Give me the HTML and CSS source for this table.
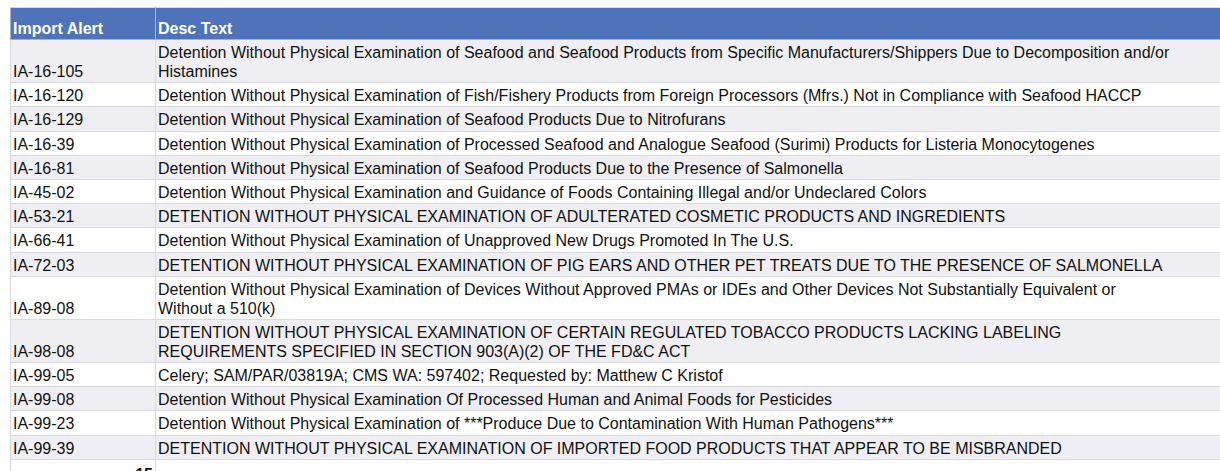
FILE: index.html
```html
<!DOCTYPE html>
<html>
<head>
<meta charset="utf-8">
<link rel="stylesheet" href="styles.css">
</head>
<body>
<table class="sheet">
  <colgroup><col class="c1"><col class="c2"></colgroup>
  <thead>
    <tr><th>Import Alert</th><th>Desc Text</th></tr>
  </thead>
  <tbody>
    <tr class="alt"><td>IA-16-105</td><td>Detention Without Physical Examination of Seafood and Seafood Products from Specific Manufacturers/Shippers Due to Decomposition and/or<br>Histamines</td></tr>
    <tr><td>IA-16-120</td><td>Detention Without Physical Examination of Fish/Fishery Products from Foreign Processors (Mfrs.) Not in Compliance with Seafood HACCP</td></tr>
    <tr class="alt"><td>IA-16-129</td><td>Detention Without Physical Examination of Seafood Products Due to Nitrofurans</td></tr>
    <tr><td>IA-16-39</td><td>Detention Without Physical Examination of Processed Seafood and Analogue Seafood (Surimi) Products for Listeria Monocytogenes</td></tr>
    <tr class="alt"><td>IA-16-81</td><td>Detention Without Physical Examination of Seafood Products Due to the Presence of Salmonella</td></tr>
    <tr><td>IA-45-02</td><td>Detention Without Physical Examination and Guidance of Foods Containing Illegal and/or Undeclared Colors</td></tr>
    <tr class="alt"><td>IA-53-21</td><td>DETENTION WITHOUT PHYSICAL EXAMINATION OF ADULTERATED COSMETIC PRODUCTS AND INGREDIENTS</td></tr>
    <tr><td>IA-66-41</td><td>Detention Without Physical Examination of Unapproved New Drugs Promoted In The U.S.</td></tr>
    <tr class="alt"><td>IA-72-03</td><td>DETENTION WITHOUT PHYSICAL EXAMINATION OF PIG EARS AND OTHER PET TREATS DUE TO THE PRESENCE OF SALMONELLA</td></tr>
    <tr><td>IA-89-08</td><td>Detention Without Physical Examination of Devices Without Approved PMAs or IDEs and Other Devices Not Substantially Equivalent or<br>Without a 510(k)</td></tr>
    <tr class="alt"><td>IA-98-08</td><td>DETENTION WITHOUT PHYSICAL EXAMINATION OF CERTAIN REGULATED TOBACCO PRODUCTS LACKING LABELING<br>REQUIREMENTS SPECIFIED IN SECTION 903(A)(2) OF THE FD&amp;C ACT</td></tr>
    <tr><td>IA-99-05</td><td>Celery; SAM/PAR/03819A; CMS WA: 597402; Requested by: Matthew C Kristof</td></tr>
    <tr class="alt"><td>IA-99-08</td><td>Detention Without Physical Examination Of Processed Human and Animal Foods for Pesticides</td></tr>
    <tr><td>IA-99-23</td><td>Detention Without Physical Examination of ***Produce Due to Contamination With Human Pathogens***</td></tr>
    <tr class="alt"><td>IA-99-39</td><td>DETENTION WITHOUT PHYSICAL EXAMINATION OF IMPORTED FOOD PRODUCTS THAT APPEAR TO BE MISBRANDED</td></tr>
  </tbody>
  <tfoot>
    <tr><td class="count">15</td><td></td></tr>
  </tfoot>
</table>
</body>
</html>
```

FILE: styles.css
```css
html, body {
  margin: 0;
  padding: 0;
  background: #ffffff;
  overflow: hidden;
}

body {
  padding: 7px 0 0 10px;
  font-family: "Liberation Sans", Arial, sans-serif;
  font-size: 16px;
  color: #111111;
}

.sheet {
  border-collapse: collapse;
  table-layout: fixed;
  width: 1260px;
}

.c1 { width: 145px; }
.c2 { width: 1115px; }

.sheet th,
.sheet td {
  border: 1px solid #d9d9de;
  padding: 3px 2px 1.2px 2px;
  line-height: 19px;
  vertical-align: bottom;
  text-align: left;
  white-space: nowrap;
  overflow: hidden;
}

.sheet th {
  background: #4e73b9;
  color: #ffffff;
  font-weight: bold;
  height: 27px;
  padding-bottom: 1px;
  border-color: #9fb3d8;
  border-top-color: #d9d9de;
}

.sheet tbody tr { background: #ffffff; }
.sheet tbody tr.alt { background: #efeef3; }

.sheet tfoot td {
  background: #ffffff;
  height: 24px;
  vertical-align: top;
}

.sheet .count {
  text-align: right;
  font-weight: bold;
  padding-top: 5px;
}
```
